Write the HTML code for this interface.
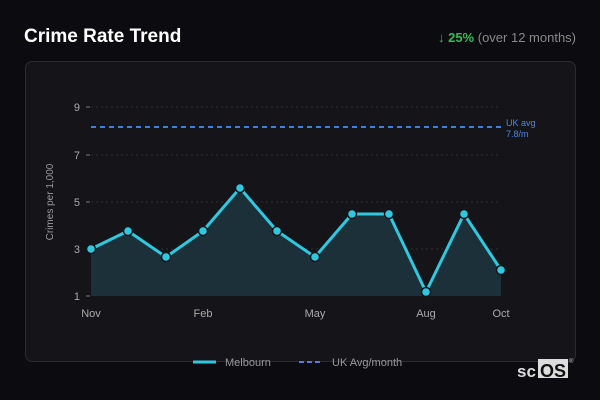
<!DOCTYPE html>
<html><head><meta charset="utf-8"><style>
body{margin:0;width:600px;height:400px;background:#0c0c10;font-family:"Liberation Sans",sans-serif;position:relative;overflow:hidden}
.t{position:absolute;left:24px;top:26px;color:#fff;font-size:19px;font-weight:bold}
.r{position:absolute;right:24px;top:30px;font-size:13px;color:#888}
.r b{color:#2ebd5a}
.card{position:absolute;left:25px;top:61px;width:549px;height:299px;border:1px solid #2a2a30;border-radius:7px;background:#151519}
svg{position:absolute;left:0;top:0}
</style></head><body>
<div class="t">Crime Rate Trend</div>
<div class="r"><b>↓ 25%</b> (over 12 months)</div>
<div class="card"></div>
<svg width="600" height="400" font-family="Liberation Sans, sans-serif">
<g stroke="#2e2e34" stroke-dasharray="2 3" stroke-width="1">
<line x1="91" x2="501" y1="107" y2="107"/><line x1="91" x2="501" y1="155" y2="155"/><line x1="91" x2="501" y1="202" y2="202"/><line x1="91" x2="501" y1="249" y2="249"/></g>
<g stroke="#777" stroke-width="1"><line x1="86" x2="90" y1="107" y2="107"/><line x1="86" x2="90" y1="155" y2="155"/><line x1="86" x2="90" y1="202" y2="202"/><line x1="86" x2="90" y1="249" y2="249"/><line x1="86" x2="90" y1="296" y2="296"/></g>
<g fill="#aaa" font-size="11" text-anchor="end"><text x="80" y="111">9</text><text x="80" y="159">7</text><text x="80" y="206">5</text><text x="80" y="253">3</text><text x="80" y="300">1</text></g>
<text transform="translate(53,202) rotate(-90)" fill="#999" font-size="10" text-anchor="middle">Crimes per 1,000</text>
<g fill="#aaa" font-size="11" text-anchor="middle"><text x="91" y="317">Nov</text><text x="203" y="317">Feb</text><text x="315" y="317">May</text><text x="426" y="317">Aug</text><text x="501" y="317">Oct</text></g>
<line x1="91" x2="501" y1="127" y2="127" stroke="#3f7fe0" stroke-width="2" stroke-dasharray="5 4"/>
<text x="506" y="126" fill="#4a86e8" font-size="9">UK avg</text><text x="506" y="137" fill="#4a86e8" font-size="9">7.8/m</text>
<path d="M91,296L91,249L128,231L166,257L203,231L240,188L277,231L315,257L352,214L389,214L426,292L464,214L501,270L501,296Z" fill="#1b3038"/>
<polyline points="91,249 128,231 166,257 203,231 240,188 277,231 315,257 352,214 389,214 426,292 464,214 501,270" fill="none" stroke="#2ec8e0" stroke-width="3" stroke-linejoin="round"/>
<g fill="#2ec8e0" stroke="#16161b" stroke-width="1.5"><circle cx="91" cy="249" r="4.5"/><circle cx="128" cy="231" r="4.5"/><circle cx="166" cy="257" r="4.5"/><circle cx="203" cy="231" r="4.5"/><circle cx="240" cy="188" r="4.5"/><circle cx="277" cy="231" r="4.5"/><circle cx="315" cy="257" r="4.5"/><circle cx="352" cy="214" r="4.5"/><circle cx="389" cy="214" r="4.5"/><circle cx="426" cy="292" r="4.5"/><circle cx="464" cy="214" r="4.5"/><circle cx="501" cy="270" r="4.5"/></g>
<line x1="193" x2="216" y1="362" y2="362" stroke="#2ec8e0" stroke-width="3"/>
<text x="225" y="366" fill="#999" font-size="11">Melbourn</text>
<line x1="299" x2="323" y1="362" y2="362" stroke="#4a7fe0" stroke-width="2" stroke-dasharray="5 3"/>
<text x="332" y="366" fill="#999" font-size="11">UK Avg/month</text>
<text x="517" y="377" fill="#ddd" font-size="17" font-weight="bold">sc</text>
<rect x="538" y="359" width="30" height="19" fill="#ddd"/>
<text x="540" y="377" fill="#111" font-size="18" font-weight="bold">OS</text>
<text x="569" y="363" fill="#bbb" font-size="6">®</text>
</svg>
</body></html>
